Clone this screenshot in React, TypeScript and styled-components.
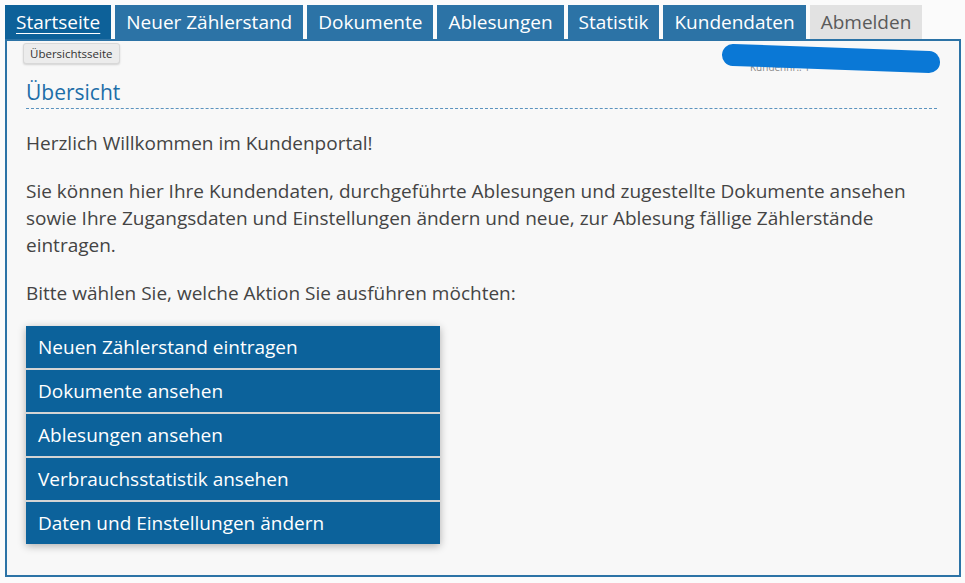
import React from 'react';
import styled, { createGlobalStyle } from 'styled-components';

const GlobalStyle = createGlobalStyle`
  html, body {
    margin: 0;
    padding: 0;
    background: #fbfbfb;
  }
  body {
    font-family: 'Open Sans', 'Liberation Sans', sans-serif;
    color: #444;
  }
`;

const Page = styled.div`
  padding: 5px 4px 6px 5px;
  width: 956px;
`;

const TabBar = styled.ul`
  display: flex;
  gap: 4px;
  margin: 0;
  padding: 0;
  list-style: none;
`;

const Tab = styled.li<{ $variant: 'active' | 'normal' | 'muted' }>`
  height: 34px;
  display: flex;
  align-items: center;
  padding: 0 11px;
  font-size: 19px;
  background: ${(p) =>
    p.$variant === 'active' ? '#0d6199' : p.$variant === 'muted' ? '#e2e2e2' : '#2c73a6'};
  color: ${(p) => (p.$variant === 'muted' ? '#5a5a5a' : '#fff')};
  text-decoration: ${(p) => (p.$variant === 'active' ? 'underline' : 'none')};
  text-underline-offset: 4px;
  text-decoration-thickness: 1px;
`;

const Panel = styled.section`
  position: relative;
  border: 2px solid #2c73a6;
  background: #f8f8f8;
  height: 534px;
  padding: 0 22px 0 19px;
`;

const Tooltip = styled.div`
  position: absolute;
  left: 16px;
  top: 2px;
  font-size: 11.5px;
  color: #333;
  background: #ececec;
  border: 1px solid #d8d8d8;
  border-radius: 3px;
  padding: 2px 6px;
  box-shadow: 0 1px 2px rgba(0, 0, 0, 0.15);
`;

const Redacted = styled.div`
  position: absolute;
  left: 715px;
  top: 3px;
  width: 218px;
  height: 30px;
`;

const HiddenLabel = styled.span`
  position: absolute;
  left: 28px;
  top: 16px;
  font-size: 10px;
  color: #888;
`;

const Scribble = styled.svg`
  position: absolute;
  left: 0;
  top: 0;
`;

const Heading = styled.h1`
  margin: 0;
  padding-top: 38px;
  padding-bottom: 2px;
  font-size: 21px;
  font-weight: 400;
  color: #1d6ea8;
  border-bottom: 1px dashed #5b93bf;
  line-height: 27px;
`;

const Text = styled.p`
  margin: 21px 0 0;
  font-size: 19px;
  line-height: 27px;
  color: #444;
`;

const ActionList = styled.div`
  margin-top: 19px;
  width: 414px;
  display: flex;
  flex-direction: column;
  gap: 2px;
  background: #d4d4d4;
  box-shadow: 0 2px 8px rgba(0, 0, 0, 0.3);
`;

const ActionButton = styled.a`
  display: flex;
  align-items: center;
  height: 42px;
  padding-left: 12px;
  background: #0c629b;
  color: #fff;
  font-size: 19px;
  text-decoration: none;
`;

const tabs: { label: string; variant: 'active' | 'normal' | 'muted' }[] = [
  { label: 'Startseite', variant: 'active' },
  { label: 'Neuer Zählerstand', variant: 'normal' },
  { label: 'Dokumente', variant: 'normal' },
  { label: 'Ablesungen', variant: 'normal' },
  { label: 'Statistik', variant: 'normal' },
  { label: 'Kundendaten', variant: 'normal' },
  { label: 'Abmelden', variant: 'muted' },
];

const actions = [
  'Neuen Zählerstand eintragen',
  'Dokumente ansehen',
  'Ablesungen ansehen',
  'Verbrauchsstatistik ansehen',
  'Daten und Einstellungen ändern',
];

const App = () => (
  <Page>
    <GlobalStyle />
    <TabBar>
      {tabs.map((t) => (
        <Tab key={t.label} $variant={t.variant}>
          {t.label}
        </Tab>
      ))}
    </TabBar>
    <Panel>
      <Tooltip>Übersichtsseite</Tooltip>
      <Redacted>
        <HiddenLabel>Kundennr.: 1</HiddenLabel>
        <Scribble width="218" height="30" viewBox="0 0 218 30">
          <path d="M11 11 L207 18" stroke="#0a78d6" strokeWidth="22" strokeLinecap="round" />
        </Scribble>
      </Redacted>
      <Heading>Übersicht</Heading>
      <Text>Herzlich Willkommen im Kundenportal!</Text>
      <Text>
        Sie können hier Ihre Kundendaten, durchgeführte Ablesungen und zugestellte Dokumente ansehen
        sowie Ihre Zugangsdaten und Einstellungen ändern und neue, zur Ablesung fällige Zählerstände
        eintragen.
      </Text>
      <Text>Bitte wählen Sie, welche Aktion Sie ausführen möchten:</Text>
      <ActionList>
        {actions.map((a) => (
          <ActionButton key={a} href="#">
            {a}
          </ActionButton>
        ))}
      </ActionList>
    </Panel>
  </Page>
);

export default App;
